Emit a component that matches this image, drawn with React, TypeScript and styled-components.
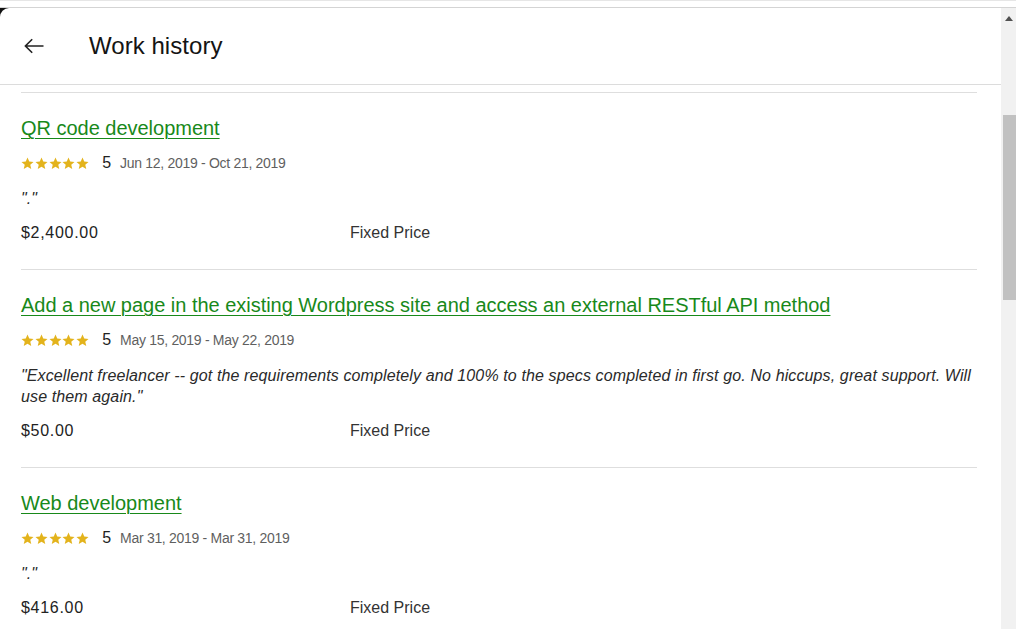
import React from "react";
import styled, { createGlobalStyle } from "styled-components";

const Global = createGlobalStyle`
  html, body { margin: 0; padding: 0; background: #fff; overflow: hidden; }
  body { font-family: "Liberation Sans", Arial, sans-serif; color: #222; }
  * { box-sizing: border-box; }
`;

const Page = styled.div`
  width: 1016px;
  height: 629px;
  display: flex;
  flex-direction: column;
  overflow: hidden;
`;

const TopStrip = styled.div`
  height: 8px;
  flex: none;
  border-top: 1px solid #e6e6e6;
  border-bottom: 1px solid #d4d4d4;
  background: #fff;
`;

const Body = styled.div`
  flex: 1;
  display: flex;
  background: #111;
  min-height: 0;
`;

const Panel = styled.div`
  flex: 1;
  background: #fff;
  border-top-left-radius: 9px;
  display: flex;
  flex-direction: column;
  min-width: 0;
`;

const Header = styled.header`
  height: 77px;
  flex: none;
  display: flex;
  align-items: center;
  padding-left: 24px;
  gap: 45px;
  border-bottom: 1px solid #dcdcdc;
`;

const BackButton = styled.button`
  border: 0;
  background: none;
  padding: 0;
  width: 20px;
  height: 20px;
  display: flex;
  align-items: center;
  justify-content: center;
  color: #222;
  cursor: pointer;
`;

const Title = styled.h1`
  margin: 0;
  font-size: 24px;
  font-weight: 400;
  color: #141414;
  letter-spacing: 0.05px;
`;

const List = styled.div`
  padding: 7px 24px 0 21px;
`;

const Item = styled.section`
  border-top: 1px solid #dedede;
  padding: 23px 0 25px;
`;

const JobTitle = styled.a`
  display: block;
  font-size: 20px;
  line-height: 24px;
  color: #18891a;
  text-decoration: underline;
  text-decoration-thickness: 1px;
  text-underline-offset: 3px;
  white-space: nowrap;
  letter-spacing: -0.02px;
`;

const MetaRow = styled.div`
  margin-top: 13px;
  height: 20px;
  display: flex;
  align-items: center;
`;

const Stars = styled.div`
  display: flex;
  gap: 0.8px;
  margin-right: 13px;
`;

const Score = styled.span`
  font-size: 16px;
  color: #222;
  margin-right: 9px;
`;

const Dates = styled.span`
  font-size: 14px;
  color: #5f5f5f;
  letter-spacing: -0.3px;
`;

const Quote = styled.p`
  margin: 15px 0 0;
  font-size: 16px;
  line-height: 21px;
  font-style: italic;
  color: #2a2a2a;
  letter-spacing: 0.12px;
`;

const PriceRow = styled.div`
  margin-top: 13px;
  display: grid;
  grid-template-columns: 329px auto;
  font-size: 16px;
  line-height: 22px;
  color: #222;
`;

const Amount = styled.span`
  letter-spacing: 0.7px;
`;

const PriceType = styled.span`
  color: #333;
`;

const Scrollbar = styled.div`
  width: 15px;
  flex: none;
  background: #f1f1f1;
  display: flex;
  flex-direction: column;
  align-items: flex-end;
`;

const ArrowUp = styled.div`
  width: 15px;
  height: 15px;
  flex: none;
  display: flex;
  align-items: center;
  justify-content: center;
  margin-top: 3px;
`;

const Thumb = styled.div`
  width: 13px;
  height: 185px;
  margin-top: 89px;
  background: #c1c1c1;
`;

const Star = () => (
  <svg width="13" height="13" viewBox="0 0 24 24">
    <path
      d="M12 1l3.2 7.3 7.9.7-6 5.3 1.8 7.8L12 18l-6.9 4.1 1.8-7.8-6-5.3 7.9-.7z"
      fill="#e3b31c"
    />
  </svg>
);

type Job = {
  title: string;
  dates: string;
  quote: string;
  amount: string;
};

const jobs: Job[] = [
  {
    title: "QR code development",
    dates: "Jun 12, 2019 - Oct 21, 2019",
    quote: "\".\"",
    amount: "$2,400.00",
  },
  {
    title:
      "Add a new page in the existing Wordpress site and access an external RESTful API method",
    dates: "May 15, 2019 - May 22, 2019",
    quote:
      "\"Excellent freelancer -- got the requirements completely and 100% to the specs completed in first go. No hiccups, great support. Will use them again.\"",
    amount: "$50.00",
  },
  {
    title: "Web development",
    dates: "Mar 31, 2019 - Mar 31, 2019",
    quote: "\".\"",
    amount: "$416.00",
  },
];

export default function App() {
  return (
    <>
      <Global />
      <Page>
        <TopStrip />
        <Body>
          <Panel>
            <Header>
              <BackButton aria-label="Back">
                <svg width="20" height="16" viewBox="0 0 20 16" fill="none">
                  <path
                    d="M19.5 8H1.5M8.2 1.2L1.4 8l6.8 6.8"
                    stroke="#222"
                    strokeWidth="1.6"
                  />
                </svg>
              </BackButton>
              <Title>Work history</Title>
            </Header>
            <List>
              {jobs.map((j) => (
                <Item key={j.title}>
                  <JobTitle href="#">{j.title}</JobTitle>
                  <MetaRow>
                    <Stars>
                      {[0, 1, 2, 3, 4].map((i) => (
                        <Star key={i} />
                      ))}
                    </Stars>
                    <Score>5</Score>
                    <Dates>{j.dates}</Dates>
                  </MetaRow>
                  <Quote>{j.quote}</Quote>
                  <PriceRow>
                    <Amount>{j.amount}</Amount>
                    <PriceType>Fixed Price</PriceType>
                  </PriceRow>
                </Item>
              ))}
            </List>
          </Panel>
          <Scrollbar>
            <ArrowUp>
              <svg width="8" height="5" viewBox="0 0 8 5">
                <path d="M0 5L4 0l4 5z" fill="#505050" />
              </svg>
            </ArrowUp>
            <Thumb />
          </Scrollbar>
        </Body>
      </Page>
    </>
  );
}
